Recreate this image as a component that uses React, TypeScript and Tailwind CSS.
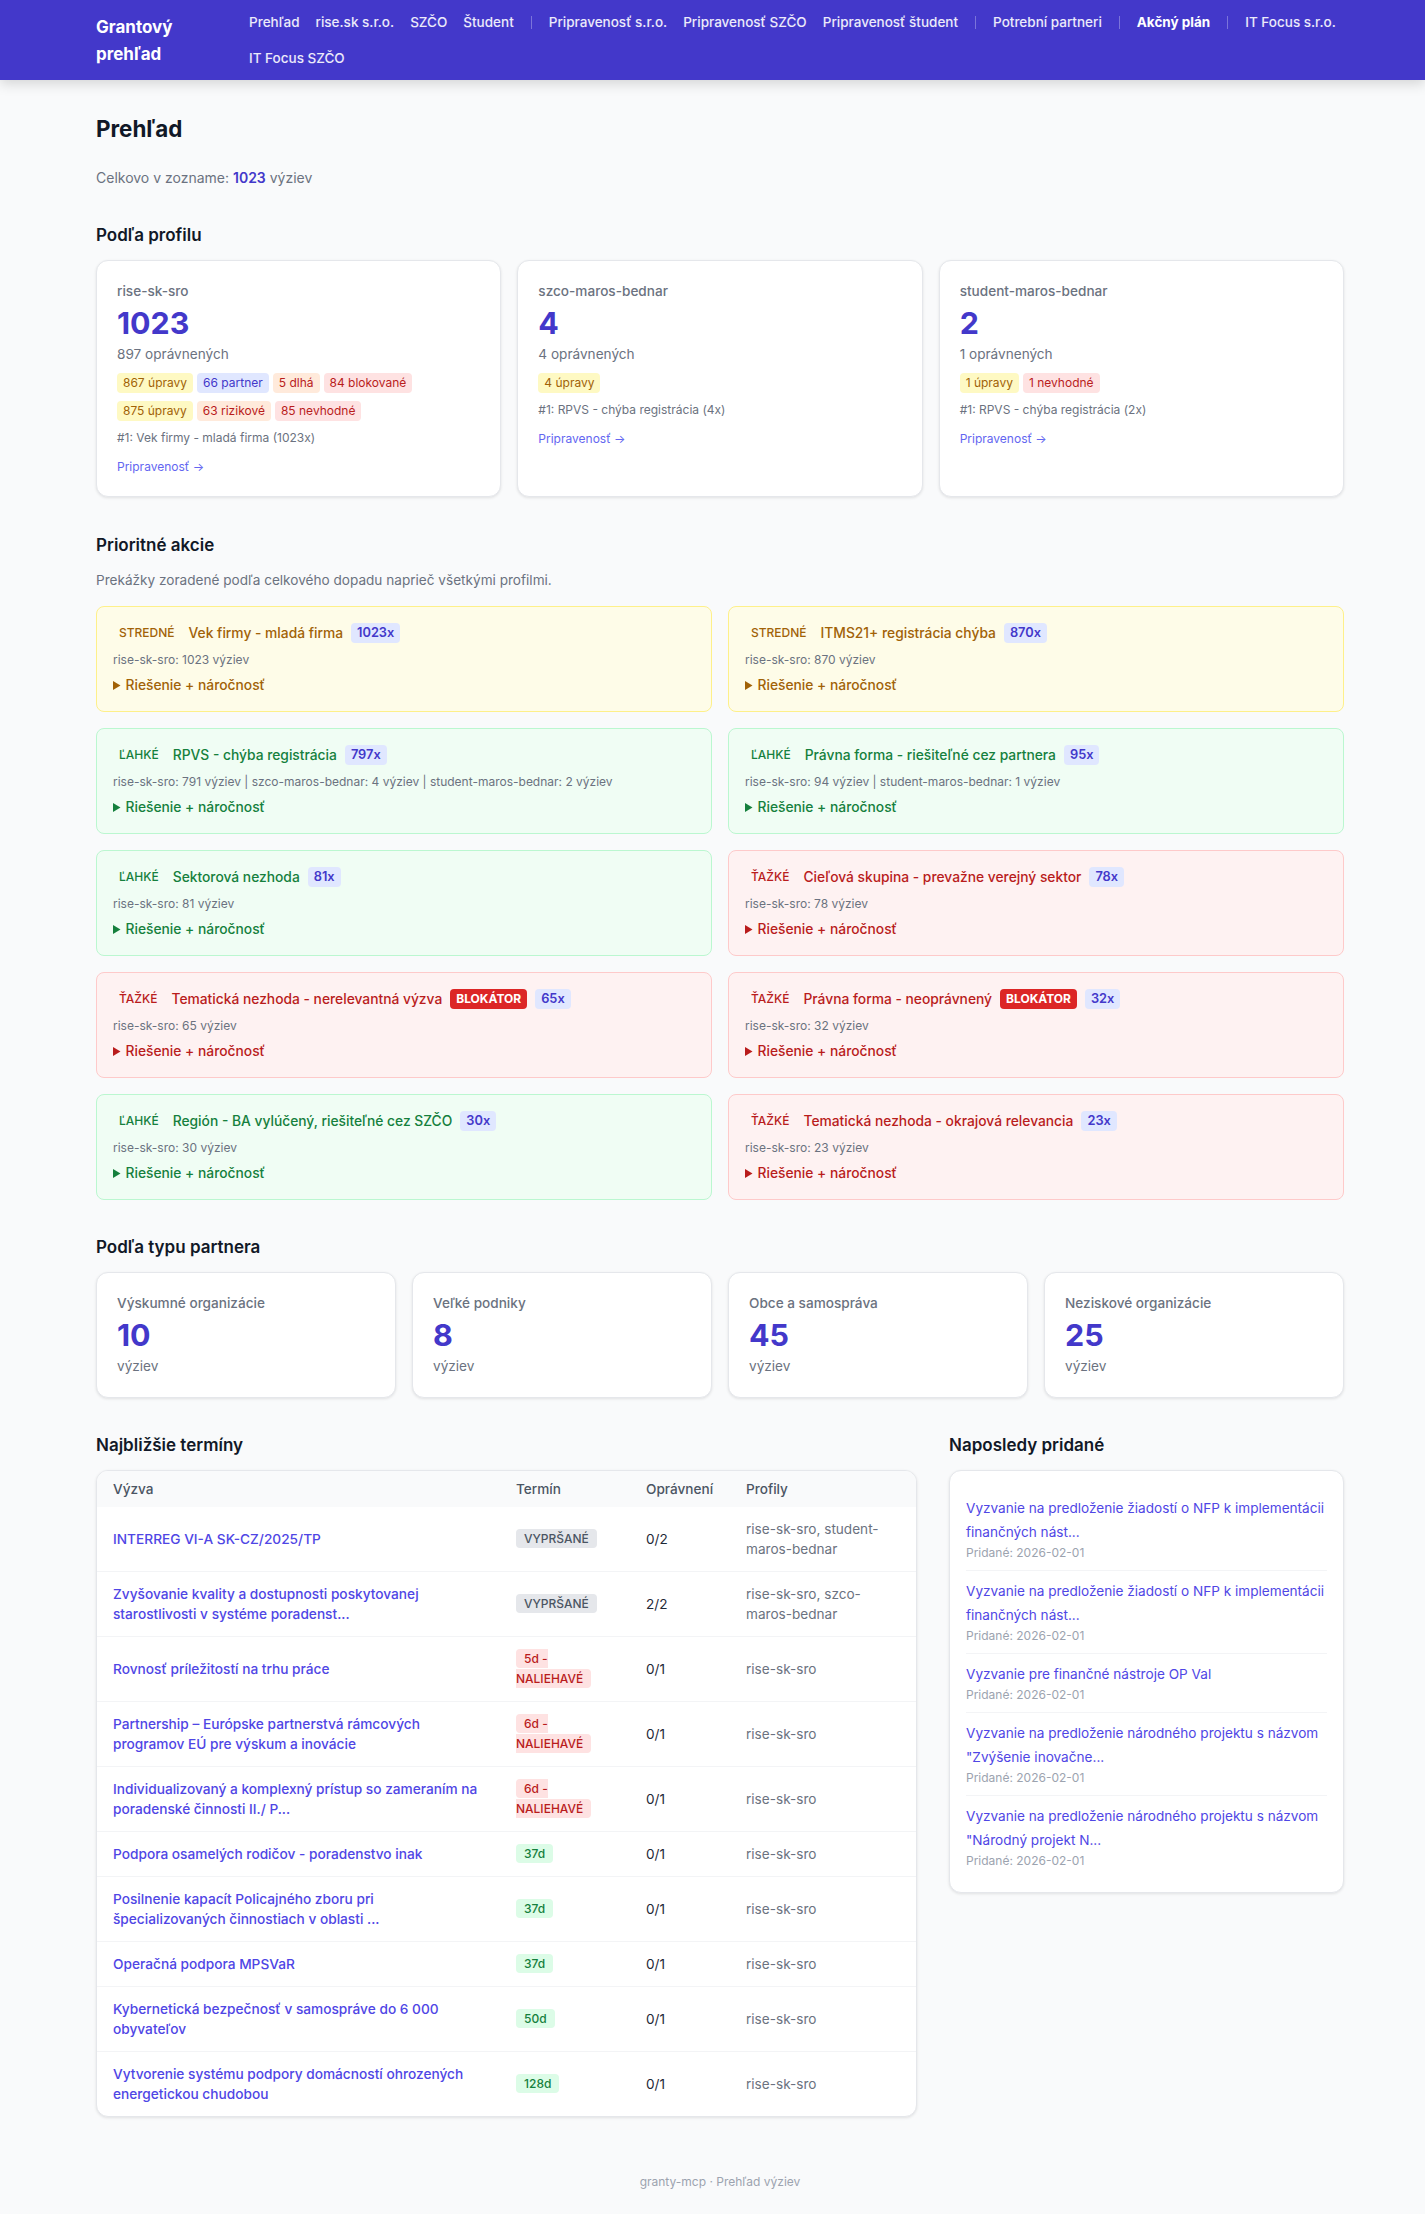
const links: (string | null)[] = [
  'Prehľad', 'rise.sk s.r.o.', 'SZČO', 'Študent', null,
  'Pripravenosť s.r.o.', 'Pripravenosť SZČO', 'Pripravenosť študent', null,
  'Potrební partneri', null, 'Akčný plán', null, 'IT Focus s.r.o.', 'IT Focus SZČO',
]

const yellow = 'bg-[#fef9c3] text-[#a16207]'
const indigo = 'bg-[#e0e7ff] text-[#4338ca]'
const red = 'bg-[#fee2e2] text-[#b91c1c]'
const orange = 'bg-[#ffeadb] text-[#b91c1c]'

const profiles = [
  {
    name: 'rise-sk-sro', total: '1023', ok: '897 oprávnených', top: '#1: Vek firmy - mladá firma (1023x)',
    pills: [
      ['867 úpravy', yellow], ['66 partner', indigo], ['5 dlhá', orange], ['84 blokované', red],
      ['875 úpravy', yellow], ['63 rizikové', orange], ['85 nevhodné', red],
    ],
  },
  { name: 'szco-maros-bednar', total: '4', ok: '4 oprávnených', top: '#1: RPVS - chýba registrácia (4x)', pills: [['4 úpravy', yellow]] },
  {
    name: 'student-maros-bednar', total: '2', ok: '1 oprávnených', top: '#1: RPVS - chýba registrácia (2x)',
    pills: [['1 úpravy', yellow], ['1 nevhodné', red]],
  },
]

const tones = {
  mid: { box: 'bg-[#fefce8] border-[#fef08a]', text: 'text-[#a16207]', label: 'STREDNÉ' },
  easy: { box: 'bg-[#f0fdf4] border-[#bbf7d0]', text: 'text-[#15803d]', label: 'ĽAHKÉ' },
  hard: { box: 'bg-[#fef2f2] border-[#fecaca]', text: 'text-[#b91c1c]', label: 'ŤAŽKÉ' },
}

const actions: { tone: keyof typeof tones; title: string; count: string; meta: string; blocker?: boolean }[] = [
  { tone: 'mid', title: 'Vek firmy - mladá firma', count: '1023x', meta: 'rise-sk-sro: 1023 výziev' },
  { tone: 'mid', title: 'ITMS21+ registrácia chýba', count: '870x', meta: 'rise-sk-sro: 870 výziev' },
  { tone: 'easy', title: 'RPVS - chýba registrácia', count: '797x', meta: 'rise-sk-sro: 791 výziev | szco-maros-bednar: 4 výziev | student-maros-bednar: 2 výziev' },
  { tone: 'easy', title: 'Právna forma - riešiteľné cez partnera', count: '95x', meta: 'rise-sk-sro: 94 výziev | student-maros-bednar: 1 výziev' },
  { tone: 'easy', title: 'Sektorová nezhoda', count: '81x', meta: 'rise-sk-sro: 81 výziev' },
  { tone: 'hard', title: 'Cieľová skupina - prevažne verejný sektor', count: '78x', meta: 'rise-sk-sro: 78 výziev' },
  { tone: 'hard', title: 'Tematická nezhoda - nerelevantná výzva', count: '65x', meta: 'rise-sk-sro: 65 výziev', blocker: true },
  { tone: 'hard', title: 'Právna forma - neoprávnený', count: '32x', meta: 'rise-sk-sro: 32 výziev', blocker: true },
  { tone: 'easy', title: 'Región - BA vylúčený, riešiteľné cez SZČO', count: '30x', meta: 'rise-sk-sro: 30 výziev' },
  { tone: 'hard', title: 'Tematická nezhoda - okrajová relevancia', count: '23x', meta: 'rise-sk-sro: 23 výziev' },
]

const partners = [
  ['Výskumné organizácie', '10'],
  ['Veľké podniky', '8'],
  ['Obce a samospráva', '45'],
  ['Neziskové organizácie', '25'],
]

const gray = 'bg-[#e5e7eb] text-[#4b5563]'
const green = 'bg-[#dcfce7] text-[#15803d]'

const deadlines = [
  ['INTERREG VI-A SK-CZ/2025/TP', 'VYPRŠANÉ', gray, '0/2', 'rise-sk-sro, student-maros-bednar'],
  ['Zvyšovanie kvality a dostupnosti poskytovanej starostlivosti v systéme poradenst...', 'VYPRŠANÉ', gray, '2/2', 'rise-sk-sro, szco-maros-bednar'],
  ['Rovnosť príležitostí na trhu práce', '5d - NALIEHAVÉ', red, '0/1', 'rise-sk-sro'],
  ['Partnership – Európske partnerstvá rámcových programov EÚ pre výskum a inovácie', '6d - NALIEHAVÉ', red, '0/1', 'rise-sk-sro'],
  ['Individualizovaný a komplexný prístup so zameraním na poradenské činnosti II./ P...', '6d - NALIEHAVÉ', red, '0/1', 'rise-sk-sro'],
  ['Podpora osamelých rodičov - poradenstvo inak', '37d', green, '0/1', 'rise-sk-sro'],
  ['Posilnenie kapacít Policajného zboru pri špecializovaných činnostiach v oblasti ...', '37d', green, '0/1', 'rise-sk-sro'],
  ['Operačná podpora MPSVaR', '37d', green, '0/1', 'rise-sk-sro'],
  ['Kybernetická bezpečnosť v samospráve do 6 000 obyvateľov', '50d', green, '0/1', 'rise-sk-sro'],
  ['Vytvorenie systému podpory domácností ohrozených energetickou chudobou', '128d', green, '0/1', 'rise-sk-sro'],
]

const recent = [
  'Vyzvanie na predloženie žiadostí o NFP k implementácii finančných nást...',
  'Vyzvanie na predloženie žiadostí o NFP k implementácii finančných nást...',
  'Vyzvanie pre finančné nástroje OP Val',
  'Vyzvanie na predloženie národného projektu s názvom "Zvýšenie inovačne...',
  'Vyzvanie na predloženie národného projektu s názvom "Národný projekt N...',
]

const card = 'bg-white border border-[#e5e7eb] rounded-xl shadow-[0_1px_3px_rgba(0,0,0,0.1)]'
const h2 = 'text-[17px] leading-[26px] font-semibold text-[#111827]'

export default function App() {
  return (
    <div className="min-h-[2214px] bg-[#f9fafb] [font-family:Inter,sans-serif] text-[#1f2937]">
      <nav className="h-20 bg-[#4338ca] shadow-[0_4px_12px_rgba(0,0,0,0.15)]">
        <div className="pl-24 pr-[81px] h-full flex items-center">
          <div className="w-[100px] mr-[53px] pt-[2px] shrink-0 text-[17px] leading-[27px] font-bold text-white">
            Grantový prehľad
          </div>
          <div className="flex-1 flex flex-wrap items-center gap-x-4 gap-y-[7px]">
            {links.map((l, i) =>
              l === null ? (
                <span key={i} className="w-px h-[13px] mx-[1px] bg-white/30" />
              ) : (
                <a key={i} className={`text-[13.5px] leading-[29px] ${l === 'Akčný plán' ? 'font-bold text-white' : 'font-medium text-white/90'}`}>
                  {l}
                </a>
              ),
            )}
          </div>
        </div>
      </nav>

      <main className="pl-24 pr-[81px]">
        <h1 className="pt-[33px] text-[22.4px] leading-[32px] font-bold text-[#111827]">Prehľad</h1>
        <p className="mt-[22px] text-[14px] leading-[22px] text-[#6b7280]">
          Celkovo v zozname: <b className="font-semibold text-[#4338ca]">1023</b> výziev
        </p>

        <h2 className={`mt-[33px] ${h2}`}>Podľa profilu</h2>
        <div className="mt-[12px] grid grid-cols-3 gap-4">
          {profiles.map((p) => (
            <div key={p.name} className={`${card} h-[237px] p-5`}>
              <div className="text-[13.6px] leading-[21px] font-medium text-[#6b7280]">{p.name}</div>
              <div className="text-[30.4px] leading-[38px] font-bold text-[#4338ca] mt-[2px]">{p.total}</div>
              <div className="text-[13.6px] leading-[21px] text-[#6b7280] mt-[2px]">{p.ok}</div>
              <div className="mt-[8px] flex flex-wrap gap-x-1 gap-y-2">
                {p.pills.map(([t, c]) => (
                  <span key={t} className={`px-1.5 text-[12px] leading-[20px] rounded ${c}`}>{t}</span>
                ))}
              </div>
              <div className="mt-[7px] text-[12px] leading-[19px] text-[#6b7280]">{p.top}</div>
              <a className="block mt-[10px] text-[12px] leading-[19px] text-[#6366f1]">Pripravenosť →</a>
            </div>
          ))}
        </div>

        <h2 className={`mt-[35px] ${h2}`}>Prioritné akcie</h2>
        <p className="mt-[12px] text-[13.6px] leading-[21px] text-[#6b7280]">
          Prekážky zoradené podľa celkového dopadu naprieč všetkými profilmi.
        </p>
        <div className="mt-[15px] grid grid-cols-2 gap-4">
          {actions.map((a) => {
            const t = tones[a.tone]
            return (
              <div key={a.title} className={`h-[106px] rounded-lg border px-4 pt-4 ${t.box}`}>
                <div className={`flex items-center gap-2 ${t.text}`}>
                  <span className="px-1.5 text-[12px] leading-[20px] font-medium">{t.label}</span>
                  <span className="text-[13.8px] leading-[20px] font-medium">{a.title}</span>
                  {a.blocker && (
                    <span className="px-1.5 rounded bg-[#dc2626] text-white text-[12px] leading-[20px] font-bold">BLOKÁTOR</span>
                  )}
                  <span className={`px-1.5 rounded text-[12.8px] leading-[20px] font-semibold ${indigo}`}>{a.count}</span>
                </div>
                <div className="mt-[7px] text-[12px] leading-[19px] text-[#6b7280]">{a.meta}</div>
                <details className={`mt-[6px] text-[13.8px] leading-[21px] font-medium ${t.text}`}>
                  <summary className="list-none flex items-center gap-[4.5px]">
                    <svg width="8" height="9" viewBox="0 0 8 9" className="fill-current">
                      <polygon points="0,0 7.5,4.5 0,9" />
                    </svg>
                    Riešenie + náročnosť
                  </summary>
                </details>
              </div>
            )
          })}
        </div>

        <h2 className={`mt-[34px] ${h2}`}>Podľa typu partnera</h2>
        <div className="mt-[12px] grid grid-cols-4 gap-4">
          {partners.map(([n, v]) => (
            <div key={n} className={`${card} h-[126px] p-5`}>
              <div className="text-[13.6px] leading-[21px] font-medium text-[#6b7280]">{n}</div>
              <div className="text-[30.4px] leading-[38px] font-bold text-[#4338ca] mt-[2px]">{v}</div>
              <div className="text-[13.6px] leading-[21px] text-[#6b7280] mt-[2px]">výziev</div>
            </div>
          ))}
        </div>

        <div className="mt-[34px] grid grid-cols-[821px_1fr] gap-x-8 items-start">
          <div>
            <h2 className={h2}>Najbližšie termíny</h2>
            <div className={`${card} mt-[12px] overflow-hidden`}>
              <table className="w-full table-fixed text-[13.6px] leading-5">
                <colgroup>
                  <col className="w-[403px]" />
                  <col className="w-[130px]" />
                  <col className="w-[100px]" />
                  <col />
                </colgroup>
                <thead className="bg-[#f9fafb]">
                  <tr className="text-left text-[#4b5563]">
                    <th className="px-4 py-2 font-medium">Výzva</th>
                    <th className="px-4 py-2 font-medium">Termín</th>
                    <th className="px-4 py-2 font-medium whitespace-nowrap">Oprávnení</th>
                    <th className="px-4 py-2 font-medium">Profily</th>
                  </tr>
                </thead>
                <tbody>
                  {deadlines.map(([title, term, tone, n, prof], i) => (
                    <tr key={i} className={i < deadlines.length - 1 ? 'border-b border-[#f3f4f6]' : ''}>
                      <td className="px-4 py-3 text-[13.7px] font-medium text-[#4f46e5]">{title}</td>
                      <td className="px-4 py-3 text-[12px]">
                        <span className={`px-2 py-0.5 rounded font-medium ${tone}`}>{term}</span>
                      </td>
                      <td className="px-4 py-3 text-[#1f2937]">{n}</td>
                      <td className="px-4 py-3 text-[#6b7280]">{prof}</td>
                    </tr>
                  ))}
                </tbody>
              </table>
            </div>
          </div>

          <div>
            <h2 className={h2}>Naposledy pridané</h2>
            <div className={`${card} mt-[12px] px-4 pt-[17px] pb-[14px]`}>
              {recent.map((r, i) => (
                <div key={i} className={`py-2 ${i < recent.length - 1 ? 'border-b border-[#f3f4f6]' : ''}`}>
                  <a className="block text-[13.6px] leading-[24px] text-[#4f46e5]">{r}</a>
                  <div className="text-[12px] leading-[18px] text-[#9ca3af]">Pridané: 2026-02-01</div>
                </div>
              ))}
            </div>
          </div>
        </div>
      </main>

      <footer className="mt-[55px] pl-24 pr-[81px] text-center text-[12px] leading-[19px] text-[#9ca3af]">granty-mcp · Prehľad výziev</footer>
    </div>
  )
}
